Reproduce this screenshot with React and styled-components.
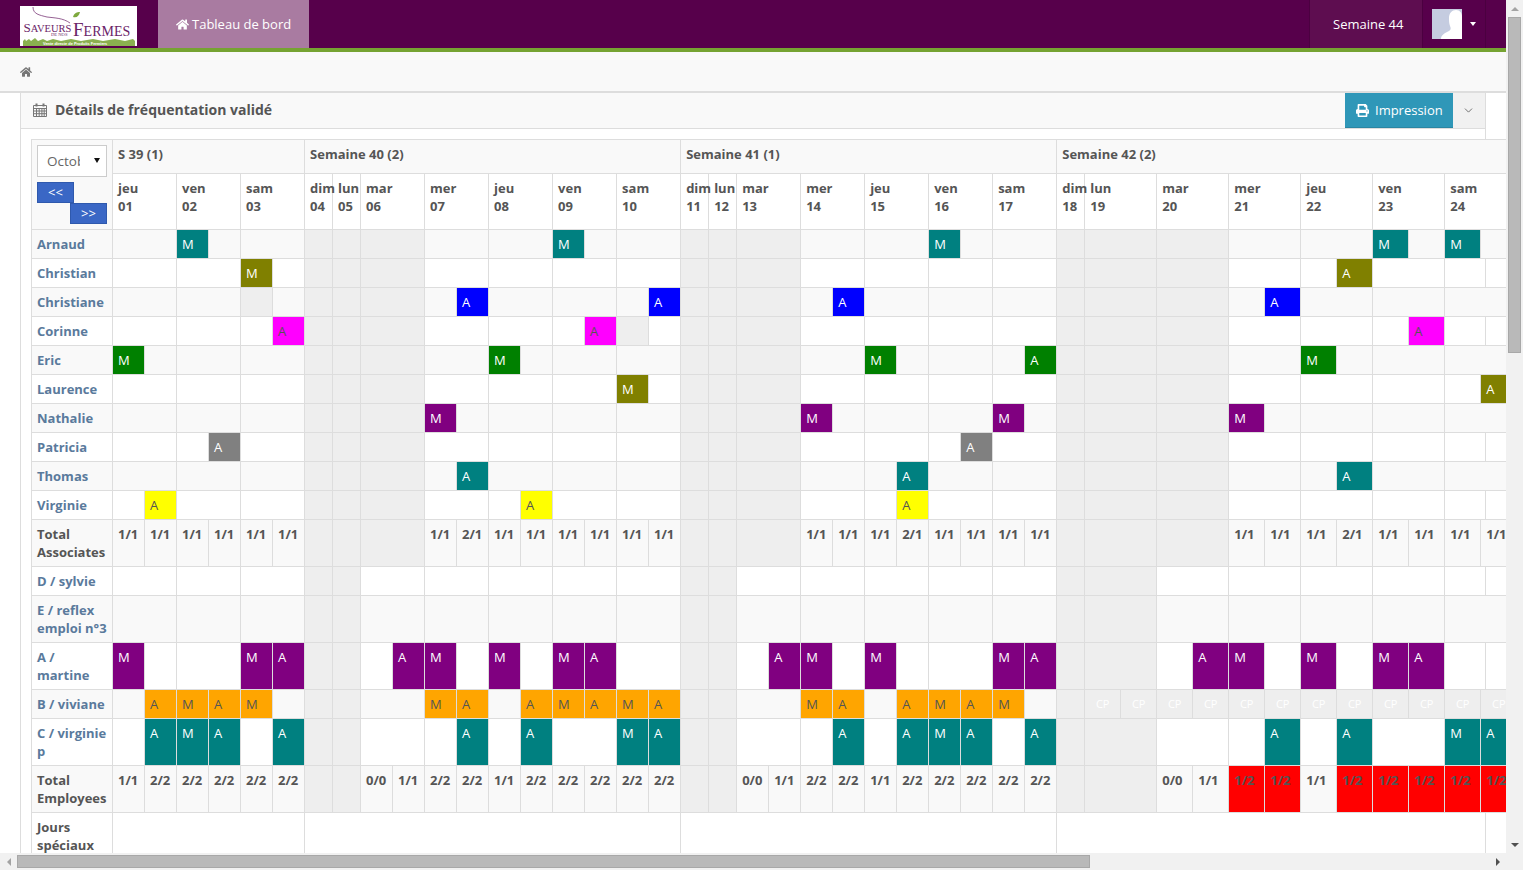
import React from 'react';
import styled, { createGlobalStyle } from 'styled-components';
import { FaHome, FaPrint } from 'react-icons/fa';
import { ChevronDown } from 'lucide-react';

const Global = createGlobalStyle`
  html, body { margin: 0; padding: 0; height: 100%; overflow: hidden; background: #fff; }
  body { font-family: "Open Sans", "Liberation Sans", sans-serif; font-size: 13px; color: #555; }
  * { box-sizing: border-box; }
`;

const Screen = styled.div`
  display: grid;
  grid-template-columns: 1506px 17px;
  grid-template-rows: 853px 17px;
  width: 1523px;
  height: 870px;
  overflow: hidden;
`;
const Main = styled.main`
  overflow: hidden;
  display: flex;
  flex-direction: column;
`;

/* ---------- top bar ---------- */
const Nav = styled.header`
  flex: none;
  height: 52px;
  display: flex;
  align-items: stretch;
  padding-left: 20px;
  background: #57004b;
  border-bottom: 4px solid #76a332;
`;
const LogoBox = styled.div`
  width: 117px;
  height: 40px;
  margin-top: 6px;
  background: #fff;
  svg { display: block; }
`;
const Tab = styled.a`
  margin-left: 21px;
  padding: 0 18px;
  display: flex;
  align-items: center;
  gap: 3px;
  background: #a97ba1;
  color: #fff;
  font-size: 13px;
  svg { width: 13px; height: 13px; }
`;
const NavRight = styled.div`
  margin-left: auto;
  margin-right: 20px;
  display: flex;
  align-items: stretch;
`;
const WeekBadge = styled.div`
  width: 114px;
  padding-left: 23px;
  display: flex;
  align-items: center;
  background: #5e0d50;
  border-left: 1px solid #4b0040;
  border-right: 1px solid #4b0040;
  color: #fff;
  font-size: 13px;
`;
const UserMenu = styled.div`
  width: 63px;
  padding: 9px 0 0 9px;
  display: flex;
  align-items: flex-start;
  border-right: 1px solid #4b0040;
`;
const Avatar = styled.svg`
  width: 30px;
  height: 30px;
  display: block;
`;
const Caret = styled.span`
  margin: 13px 0 0 8px;
  width: 0;
  height: 0;
  border-left: 3.5px solid transparent;
  border-right: 3.5px solid transparent;
  border-top: 4px solid #fff;
`;

/* ---------- breadcrumb ---------- */
const Breadcrumb = styled.nav`
  flex: none;
  height: 41px;
  padding-left: 20px;
  display: flex;
  align-items: center;
  background: #f9f9f9;
  border-bottom: 2px solid #ddd;
  color: #777;
  svg { width: 12px; height: 12px; margin-top: 1px; }
`;

/* ---------- panel ---------- */
const Content = styled.section`
  flex: 1;
  padding-left: 20px;
`;
const Panel = styled.div`
  width: 1466px;
  min-height: 100%;
  border-left: 1px solid #ddd;
  border-right: 1px solid #ddd;
`;
const PanelHead = styled.div`
  height: 36px;
  display: flex;
  align-items: stretch;
  background: #f9f9f9;
  border-bottom: 1px solid #ddd;
`;
const PanelTitle = styled.h2`
  flex: 1;
  margin: 0;
  padding: 0 0 2px 12px;
  display: flex;
  align-items: center;
  gap: 8px;
  font-size: 14px;
  font-weight: 700;
  color: #555;
  svg { display: block; }
`;
const PrintButton = styled.button`
  width: 108px;
  padding: 0 0 0 11px;
  display: flex;
  align-items: center;
  gap: 6px;
  border: 0;
  border-bottom: 1px solid #2a86a3;
  background: #2f97b8;
  color: #fff;
  font: 400 13px "Open Sans", sans-serif;
  svg { width: 13px; height: 13px; }
`;
const MoreButton = styled.button`
  width: 32px;
  padding: 0 2px 0 0;
  border: 0;
  background: #f1f1f1;
  color: #555;
  display: flex;
  align-items: center;
  justify-content: center;
`;
const PanelBody = styled.div`
  padding: 10px;
`;

/* ---------- planning table ---------- */
const Planning = styled.table`
  table-layout: fixed;
  width: 1486px;
  border-collapse: collapse;
  font-size: 13px;
  line-height: 18px;
  color: #555;
  th, td {
    padding: 5px;
    border: 1px solid #ddd;
    vertical-align: top;
    text-align: left;
  }
`;
const Row = styled.tr`
  background: ${p => (p.$striped ? '#f9f9f9' : 'transparent')};
`;
const Corner = styled.th`
  background: #f9f9f9;
  font-weight: 400;
`;
const MonthSelect = styled.div`
  position: relative;
  width: 70px;
  height: 32px;
  &::after {
    content: '';
    position: absolute;
    right: 7px;
    top: 13px;
    border-left: 3px solid transparent;
    border-right: 3px solid transparent;
    border-top: 5px solid #111;
    pointer-events: none;
  }
  select {
    appearance: none;
    width: 100%;
    height: 100%;
    padding: 0 26px 0 9px;
    border: 1px solid #ccc;
    border-radius: 0;
    background: #fff;
    color: #666;
    font: 400 13.5px "Open Sans", sans-serif;
  }
`;
const PagerStack = styled.div`
  margin-top: 5px;
  display: flex;
  flex-direction: column;
`;
const PagerButton = styled.button`
  width: 37px;
  height: 21px;
  padding: 0;
  align-self: ${p => (p.$next ? 'flex-end' : 'flex-start')};
  background: #3a67c5;
  border: 1px solid #2f59ad;
  color: #fff;
  font: 400 13px/1 "Open Sans", sans-serif;
`;
const WeekHead = styled.th`
  height: 34px;
  background: #f9f9f9;
  font-weight: 700;
  white-space: nowrap;
  overflow: hidden;
`;
const DayHead = styled.th`
  height: 56px;
  background: #fff;
  font-weight: 700;
  white-space: nowrap;
`;
const Label = styled.th`
  font-weight: 700;
  color: ${p => (p.$plain ? '#555' : '#5a7a9c')};
`;
const TONES = {
  teal: ['#008080', '#fff'],
  olive: ['#808000', '#fff'],
  blue: ['#0000ff', '#fff'],
  magenta: ['#ff00ff', '#555'],
  green: ['#008000', '#fff'],
  purple: ['#800080', '#fff'],
  gray: ['#808080', '#fff'],
  yellow: ['#ffff00', '#555'],
  orange: ['#ffa500', '#555'],
  red: ['#ff0000', '#555'],
  off: ['#eeeeee', '#555'],
  cp: ['#eeeeee', '#fff'],
};
const Slot = styled.td`
  ${p => (p.$tone ? `background: ${TONES[p.$tone][0]}; color: ${TONES[p.$tone][1]};` : '')}
  ${p => (p.$bold ? 'font-weight: 700;' : '')}
  ${p => (p.$tone === 'cp' ? 'font-size: 11px; text-align: center !important; padding-left: 0 !important; padding-right: 0 !important;' : '')}
  white-space: nowrap;
  overflow: hidden;
`;

/* ---------- fake browser scrollbars ---------- */
const VBar = styled.div`
  background: #f1f1f1;
  padding: 0 2px;
  display: flex;
  flex-direction: column;
  align-items: stretch;
`;
const HBar = styled.div`
  grid-column: 1 / span 2;
  background: #f1f1f1;
  padding: 2px 0;
  display: flex;
  align-items: stretch;
`;
const ArrowCell = styled.div`
  flex: none;
  width: ${p => (p.$vertical ? 'auto' : '17px')};
  height: ${p => (p.$vertical ? '17px' : 'auto')};
  display: flex;
  align-items: center;
  justify-content: center;
`;
const Tri = styled.span`
  width: 0;
  height: 0;
  ${p => {
    const c = p.$dim ? '#a3a3a3' : '#505050';
    if (p.$dir === 'up') return `border-left:4px solid transparent;border-right:4px solid transparent;border-bottom:4px solid ${c};`;
    if (p.$dir === 'down') return `border-left:4px solid transparent;border-right:4px solid transparent;border-top:4px solid ${c};`;
    if (p.$dir === 'left') return `border-top:4px solid transparent;border-bottom:4px solid transparent;border-right:4px solid ${c};`;
    return `border-top:4px solid transparent;border-bottom:4px solid transparent;border-left:4px solid ${c};`;
  }}
`;
const VThumb = styled.div`
  flex: none;
  height: 336px;
  background: #b9b9b9;
  border: 1px solid #a8a8a8;
`;
const HThumb = styled.div`
  flex: none;
  width: 1073px;
  background: #b9b9b9;
  border: 1px solid #a8a8a8;
`;
const Spacer = styled.div`flex: 1;`;
const HEnd = styled.div`
  flex: none;
  width: 17px;
`;

/* ---------- data ---------- */
const WEEKS = [
  { label: 'S 39 (1)', span: 6 },
  { label: 'Semaine 40 (2)', span: 12 },
  { label: 'Semaine 41 (1)', span: 12 },
  { label: 'Semaine 42 (2)', span: 13 },
];
const D = (n, d, span = 2) => ({ n, d, span });
const DAYS = [
  D('jeu', '01'), D('ven', '02'), D('sam', '03'),
  D('dim', '04', 1), D('lun', '05', 1), D('mar', '06'), D('mer', '07'), D('jeu', '08'), D('ven', '09'), D('sam', '10'),
  D('dim', '11', 1), D('lun', '12', 1), D('mar', '13'), D('mer', '14'), D('jeu', '15'), D('ven', '16'), D('sam', '17'),
  D('dim', '18', 1), D('lun', '19'), D('mar', '20'), D('mer', '21'), D('jeu', '22'), D('ven', '23'), D('sam', '24'),
];
const COLS = [
  81,
  ...Array(6).fill(32),
  28, 28, ...Array(10).fill(32),
  28, 28, ...Array(10).fill(32),
  28, ...Array(12).fill(36),
];
const OFF_ALL = ['04', '05', '11', '12', '18', '19'];
const OFF_ASSOC = [...OFF_ALL, '06', '13', '20'];

const fill = (keys, str) => {
  const v = str.split(' ').map(t => (t === '-' ? null : t.replace('!', ' red')));
  return Object.fromEntries(keys.map((k, i) => [k, [v[i * 2], v[i * 2 + 1]]]));
};
const AT = ['01', '02', '03', '07', '08', '09', '10', '14', '15', '16', '17', '21', '22', '23', '24'];
const ET = ['01', '02', '03', '06', '07', '08', '09', '10', '13', '14', '15', '16', '17', '20', '21', '22', '23', '24'];

const ROWS = [
  { name: 'Arnaud', off: OFF_ASSOC, days: { '02': ['M teal'], '09': ['M teal'], '16': ['M teal'], '23': ['M teal'], '24': ['M teal'] } },
  { name: 'Christian', off: OFF_ASSOC, days: { '03': ['M olive'], '22': [null, 'A olive'] } },
  { name: 'Christiane', off: OFF_ASSOC, days: { '03': ['off'], '07': [null, 'A blue'], '10': [null, 'A blue'], '14': [null, 'A blue'], '21': [null, 'A blue'] } },
  { name: 'Corinne', off: OFF_ASSOC, days: { '03': [null, 'A magenta'], '09': [null, 'A magenta'], '10': ['off'], '23': [null, 'A magenta'] } },
  { name: 'Eric', off: OFF_ASSOC, days: { '01': ['M green'], '08': ['M green'], '15': ['M green'], '17': [null, 'A green'], '22': ['M green'] } },
  { name: 'Laurence', off: OFF_ASSOC, days: { '10': ['M olive'], '24': [null, 'A olive'] } },
  { name: 'Nathalie', off: OFF_ASSOC, days: { '07': ['M purple'], '14': ['M purple'], '17': ['M purple'], '21': ['M purple'] } },
  { name: 'Patricia', off: OFF_ASSOC, days: { '02': [null, 'A gray'], '16': [null, 'A gray'] } },
  { name: 'Thomas', off: OFF_ASSOC, days: { '07': [null, 'A teal'], '15': [null, 'A teal'], '22': [null, 'A teal'] } },
  { name: 'Virginie', off: OFF_ASSOC, days: { '01': [null, 'A yellow'], '08': [null, 'A yellow'], '15': [null, 'A yellow'] } },
  {
    name: 'Total Associates', plain: true, off: OFF_ASSOC,
    days: fill(AT, '1/1 1/1 1/1 1/1 1/1 1/1 1/1 2/1 1/1 1/1 1/1 1/1 1/1 1/1 1/1 1/1 1/1 2/1 1/1 1/1 1/1 1/1 1/1 1/1 1/1 2/1 1/1 1/1 1/1 1/1'),
  },
  { name: 'D / sylvie', off: OFF_ALL, days: {} },
  { name: 'E / reflex emploi n°3', off: OFF_ALL, days: {} },
  {
    name: 'A / martine', off: OFF_ALL,
    days: {
      '01': ['M purple'], '03': ['M purple', 'A purple'], '06': [null, 'A purple'], '07': ['M purple'], '08': ['M purple'], '09': ['M purple', 'A purple'],
      '13': [null, 'A purple'], '14': ['M purple'], '15': ['M purple'], '17': ['M purple', 'A purple'],
      '20': [null, 'A purple'], '21': ['M purple'], '22': ['M purple'], '23': ['M purple', 'A purple'],
    },
  },
  {
    name: 'B / viviane', off: OFF_ALL,
    days: {
      '01': [null, 'A orange'], '02': ['M orange', 'A orange'], '03': ['M orange'],
      '07': ['M orange', 'A orange'], '08': [null, 'A orange'], '09': ['M orange', 'A orange'], '10': ['M orange', 'A orange'],
      '14': ['M orange', 'A orange'], '15': [null, 'A orange'], '16': ['M orange', 'A orange'], '17': ['M orange'],
      '19': ['cp', 'cp'], '20': ['cp', 'cp'], '21': ['cp', 'cp'], '22': ['cp', 'cp'], '23': ['cp', 'cp'], '24': ['cp', 'cp'],
    },
  },
  {
    name: 'C / virginie p', off: OFF_ALL,
    days: {
      '01': [null, 'A teal'], '02': ['M teal', 'A teal'], '03': [null, 'A teal'],
      '07': [null, 'A teal'], '08': [null, 'A teal'], '10': ['M teal', 'A teal'],
      '14': [null, 'A teal'], '15': [null, 'A teal'], '16': ['M teal', 'A teal'], '17': [null, 'A teal'],
      '21': [null, 'A teal'], '22': [null, 'A teal'], '24': ['M teal', 'A teal'],
    },
  },
  {
    name: 'Total Employees', plain: true, off: OFF_ALL,
    days: fill(ET, '1/1 2/2 2/2 2/2 2/2 2/2 0/0 1/1 2/2 2/2 1/1 2/2 2/2 2/2 2/2 2/2 0/0 1/1 2/2 2/2 1/1 2/2 2/2 2/2 2/2 2/2 0/0 1/1 1/2! 1/2! 1/1 1/2! 1/2! 1/2! 1/2! 1/2!'),
  },
];

const parse = tok => {
  if (!tok) return {};
  if (tok === 'off') return { tone: 'off' };
  if (tok === 'cp') return { tone: 'cp', text: 'CP' };
  const [text, tone] = tok.split(' ');
  return { text, tone, bold: text.includes('/') };
};

const HalfSlot = ({ tok }) => {
  const s = parse(tok);
  return <Slot $tone={s.tone} $bold={s.bold}>{s.text}</Slot>;
};

const DayCells = ({ row, day }) => {
  const v = row.days[day.d];
  if (v) {
    return (<><HalfSlot tok={v[0]} /><HalfSlot tok={v[1]} /></>);
  }
  return <Slot colSpan={day.span} $tone={row.off.includes(day.d) ? 'off' : undefined} />;
};

const CalendarIcon = () => (
  <svg width="14" height="14" viewBox="0 0 14 14" fill="none" stroke="#777" strokeWidth="1">
    <path d="M.5 2.5h13v11H.5z" />
    <path d="M.5 5.5h13M.5 8h13M.5 10.7h13M3.5 5.5v8M6.2 5.5v8M8.9 5.5v8M11.2 5.5v8" />
    <path d="M3.5 .5v3M10.5 .5v3" strokeWidth="2" />
  </svg>
);

const SERIF = 'Liberation Serif, serif';
const Logo = () => (
  <svg width="117" height="40" viewBox="0 0 117 40">
    <path d="M13 1c0 7 6 8 14 10 8 1 16 1 23 6" fill="none" stroke="#7b3a78" strokeWidth=".8" />
    <path d="M53 11c1-4 4-5 7-5-1 4-3 6-7 5z" fill="#7ea93e" />
    <text x="3.5" y="25.5" fontFamily={SERIF} fontSize="10.5" fill="#6b2468"><tspan fontSize="13">S</tspan>AVEURS</text>
    <text x="31" y="30" fontFamily={SERIF} fontSize="4.6" fill="#6b2468">DE NOS</text>
    <text x="53" y="29.5" fontFamily={SERIF} fontSize="14" fill="#6b2468"><tspan fontSize="19">F</tspan>ERMES</text>
    <path d="M3 40v-5l2-2 1 2 3-2 2 2 4-3 3 3 5-2 4 2 6-2 8 2 10-2 10 2 12-2 10 2 12-2 10 2 8-2 2 2v5z" fill="#8ab04f" />
    <text x="23" y="38.6" fontFamily="Liberation Sans, sans-serif" fontWeight="700" fontSize="3.9" fill="#fff">Vente directe de Produits Fermiers</text>
  </svg>
);

export default function App() {
  return (
    <Screen>
      <Global />
      <Main>
        <Nav>
          <LogoBox><Logo /></LogoBox>
          <Tab><FaHome /> Tableau de bord</Tab>
          <NavRight>
            <WeekBadge>Semaine 44</WeekBadge>
            <UserMenu>
              <Avatar viewBox="0 0 30 30">
                <rect width="30" height="30" fill="#c5cce0" />
                <path d="M24 1c4 0 6 3 6 7v22H9c0-4 4-6 8-8 2-1 2-3 1-5-1-3-1-5-1-8 0-5 3-8 7-8z" fill="#fff" />
              </Avatar>
              <Caret />
            </UserMenu>
          </NavRight>
        </Nav>
        <Breadcrumb><FaHome /></Breadcrumb>
        <Content>
          <Panel>
            <PanelHead>
              <PanelTitle><CalendarIcon /> Détails de fréquentation validé</PanelTitle>
              <PrintButton><FaPrint /> Impression</PrintButton>
              <MoreButton><ChevronDown size={13} strokeWidth={1.5} /></MoreButton>
            </PanelHead>
            <PanelBody>
              <Planning>
                <colgroup>
                  {COLS.map((w, i) => <col key={i} width={w} />)}
                </colgroup>
                <thead>
                  <tr>
                    <Corner rowSpan={2}>
                      <MonthSelect>
                        <select defaultValue="10"><option value="10">Octobre</option></select>
                      </MonthSelect>
                      <PagerStack>
                        <PagerButton>&lt;&lt;</PagerButton>
                        <PagerButton $next>&gt;&gt;</PagerButton>
                      </PagerStack>
                    </Corner>
                    {WEEKS.map(w => <WeekHead key={w.label} colSpan={w.span}>{w.label}</WeekHead>)}
                  </tr>
                  <tr>
                    {DAYS.map(d => <DayHead key={d.d} colSpan={d.span}>{d.n}<br />{d.d}</DayHead>)}
                  </tr>
                </thead>
                <tbody>
                  {ROWS.map((row, i) => (
                    <Row key={row.name} $striped={i % 2 === 0}>
                      <Label $plain={row.plain}>{row.name}</Label>
                      {DAYS.map(d => <DayCells key={d.d} row={row} day={d} />)}
                    </Row>
                  ))}
                  <Row>
                    <Label $plain>Jours spéciaux</Label>
                    {WEEKS.map(w => <Slot key={w.label} colSpan={w.span} />)}
                  </Row>
                </tbody>
              </Planning>
            </PanelBody>
          </Panel>
        </Content>
      </Main>
      <VBar>
        <ArrowCell $vertical><Tri $dir="up" $dim /></ArrowCell>
        <VThumb />
        <Spacer />
        <ArrowCell $vertical><Tri $dir="down" /></ArrowCell>
      </VBar>
      <HBar>
        <ArrowCell><Tri $dir="left" $dim /></ArrowCell>
        <HThumb />
        <Spacer />
        <ArrowCell><Tri $dir="right" /></ArrowCell>
        <HEnd />
      </HBar>
    </Screen>
  );
}
